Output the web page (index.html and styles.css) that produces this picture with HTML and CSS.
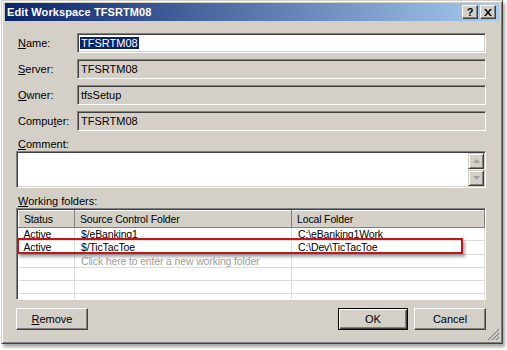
FILE: index.html
```html
<!DOCTYPE html>
<html>
<head>
	<meta charset="utf-8">
	<title>Edit Workspace TFSRTM08</title>
	<link rel="stylesheet" href="styles.css">
</head>
<body>
	<div class="dialog">
		<div class="titlebar">
			<span class="title">Edit Workspace TFSRTM08</span>
			<div class="caption_btns">
				<span class="cbtn">?</span>
				<span class="cbtn close">
					<svg width="8" height="7" viewBox="0 0 8 7"><path d="M0 0h2l2 2.5 2-2.5h2l-3 3.5 3 3.5h-2l-2-2.5-2 2.5h-2l3-3.5z" fill="#000"/></svg>
				</span>
			</div>
		</div>

		<div class="client">
			<div class="fields">
				<label><u>N</u>ame:</label>
				<div class="field edit"><span class="sel">TFSRTM08</span></div>
				<label><u>S</u>erver:</label>
				<div class="field">TFSRTM08</div>
				<label><u>O</u>wner:</label>
				<div class="field">tfsSetup</div>
				<label>Compu<u>t</u>er:</label>
				<div class="field">TFSRTM08</div>
			</div>

			<div class="label"><u>C</u>omment:</div>
			<div class="memo">
				<div class="vscroll">
					<span class="sbtn"><svg width="7" height="4" viewBox="0 0 7 4"><path d="M3.5 0L7 4H0z" fill="#a0a0a0"/></svg></span>
					<span class="track"></span>
					<span class="sbtn"><svg width="7" height="4" viewBox="0 0 7 4"><path d="M0 0h7L3.5 4z" fill="#a0a0a0"/></svg></span>
				</div>
			</div>

			<div class="label"><u>W</u>orking folders:</div>
			<div class="grid_box">
				<table class="folders">
					<colgroup><col class="c1"><col class="c2"><col></colgroup>
					<tr><th>Status</th><th>Source Control Folder</th><th>Local Folder</th></tr>
					<tr><td>Active</td><td>$/eBanking1</td><td>C:\eBanking1Work</td></tr>
					<tr><td>Active</td><td>$/TicTacToe</td><td>C:\Dev\TicTacToe</td></tr>
					<tr><td></td><td class="hint">Click here to enter a new working folder</td><td></td></tr>
					<tr><td></td><td></td><td></td></tr>
					<tr><td></td><td></td><td></td></tr>
					<tr><td></td><td></td><td></td></tr>
				</table>
				<div class="mark"></div>
			</div>

			<div class="buttons">
				<span class="btn remove"><u>R</u>emove</span>
				<span class="spacer"></span>
				<span class="btn default">OK</span>
				<span class="btn">Cancel</span>
			</div>
		</div>

		<div class="grip">
			<svg width="12" height="12" viewBox="0 0 12 12">
				<path d="M11 1L1 11M11 5L5 11M11 9L9 11" stroke="#fff" stroke-width="1"/>
				<path d="M12 1L1 12M12 5L5 12M12 9L9 12" stroke="#808080" stroke-width="1.2"/>
			</svg>
		</div>
	</div>
</body>
</html>
```

FILE: styles.css
```css
*{margin: 0; padding: 0; box-sizing: border-box;}
body{background: #fff; font-family: "Liberation Sans", Arial, sans-serif; font-size: 11px; color: #000; height: 350px; overflow: hidden;}
u{text-decoration: underline;}

.dialog{position: relative; margin-left: 1px; width: 502px; height: 344px; background: #d4d0c8; border: 1px solid; border-color: #d4d0c8 #404040 #404040 #d4d0c8; box-shadow: inset 1px 1px 0 #fff, inset -1px -1px 0 #808080, 2px 3px 3px rgba(0,0,0,.35); padding: 2px 3px 3px 3px;}

/* caption */
.titlebar{height: 18px; display: flex; align-items: center; justify-content: space-between; padding: 0 3px 0 2px; background: linear-gradient(to right, #0a246a, #a6caf0);}
.title{color: #fff; font-weight: bold; font-size: 11px; letter-spacing: .1px;}
.caption_btns{display: flex; gap: 2px;}
.cbtn{width: 16px; height: 14px; background: #d4d0c8; border: 1px solid; border-color: #fff #404040 #404040 #fff; box-shadow: inset -1px -1px 0 #808080; display: flex; align-items: center; justify-content: center; font-weight: bold; font-size: 11px; line-height: 1;}

.client{padding: 12px 13px 0 11px;}

/* fields */
.fields{display: grid; grid-template-columns: 61px 1fr; row-gap: 6px; align-items: center;}
.fields label{padding-left: 2px;}
.field{height: 20px; border: 1px solid; border-color: #808080 #fff #fff #808080; box-shadow: inset 1px 1px 0 #404040, inset -1px -1px 0 #d4d0c8; padding: 3px 0 0 3px; line-height: 13px; white-space: nowrap;}
.field.edit{background: #fff; padding-left: 2px;}
.sel{background: #0a246a; color: #fff; padding: 0 1px;}

.label{margin-top: 6px; padding-left: 2px; line-height: 14px; height: 14px;}

.memo{height: 37px; background: #fff; border: 1px solid; border-color: #808080 #fff #fff #808080; box-shadow: inset 1px 1px 0 #404040, inset -1px -1px 0 #d4d0c8; display: flex; justify-content: flex-end; padding: 1px 1px 1px 0;}
.vscroll{width: 16px; display: flex; flex-direction: column;}
.sbtn{height: 16px; background: #d4d0c8; border: 1px solid; border-color: #d4d0c8 #404040 #404040 #d4d0c8; box-shadow: inset 1px 1px 0 #fff, inset -1px -1px 0 #808080; display: flex; align-items: center; justify-content: center;}
.track{flex: 1; background: #f1efe9;}

/* working folders */
.grid_box{position: relative; height: 92px; background: #fff; border: 1px solid; border-color: #808080 #fff #fff #808080; box-shadow: inset 1px 1px 0 #404040; padding: 1px 0 0 1px; overflow: hidden;}
.folders{width: 100%; border-collapse: collapse; table-layout: fixed; font-size: 10.5px; letter-spacing: -.15px;}
.folders .c1{width: 56px;}
.folders .c2{width: 217px;}
.folders th{height: 17px; font-weight: normal; text-align: left; background: #d4d0c8; border: 1px solid; border-color: #fff #808080 #808080 #fff; padding: 0 0 0 5px;}
.folders td{height: 13.3px; line-height: 12px; padding: 0 0 0 6px; border-right: 1px solid #dedcd6; border-bottom: 1px solid #dedcd6; white-space: nowrap; overflow: hidden;}
.folders td:first-child{padding-left: 5px;}
.folders .hint{color: #a0a0a0;}
.mark{position: absolute; left: 0; top: 29px; width: 446px; height: 16px; border: 2px solid #c4141c; box-shadow: 2px 3px 3px rgba(0,0,0,.35);}

/* buttons */
.buttons{display: flex; margin-top: 8px; gap: 6px;}
.spacer{flex: 1;}
.btn{height: 22px; width: 72px; background: #d4d0c8; border: 1px solid; border-color: #fff #404040 #404040 #fff; box-shadow: inset -1px -1px 0 #808080; display: flex; align-items: center; justify-content: center;}
.btn.default{width: 70px; border: 1px solid #000; box-shadow: inset 1px 1px 0 #fff, inset -1px -1px 0 #404040, inset -2px -2px 0 #808080;}
.btn.remove{width: 72px;}

.grip{position: absolute; right: 3px; bottom: 3px; width: 12px; height: 12px;}
```
